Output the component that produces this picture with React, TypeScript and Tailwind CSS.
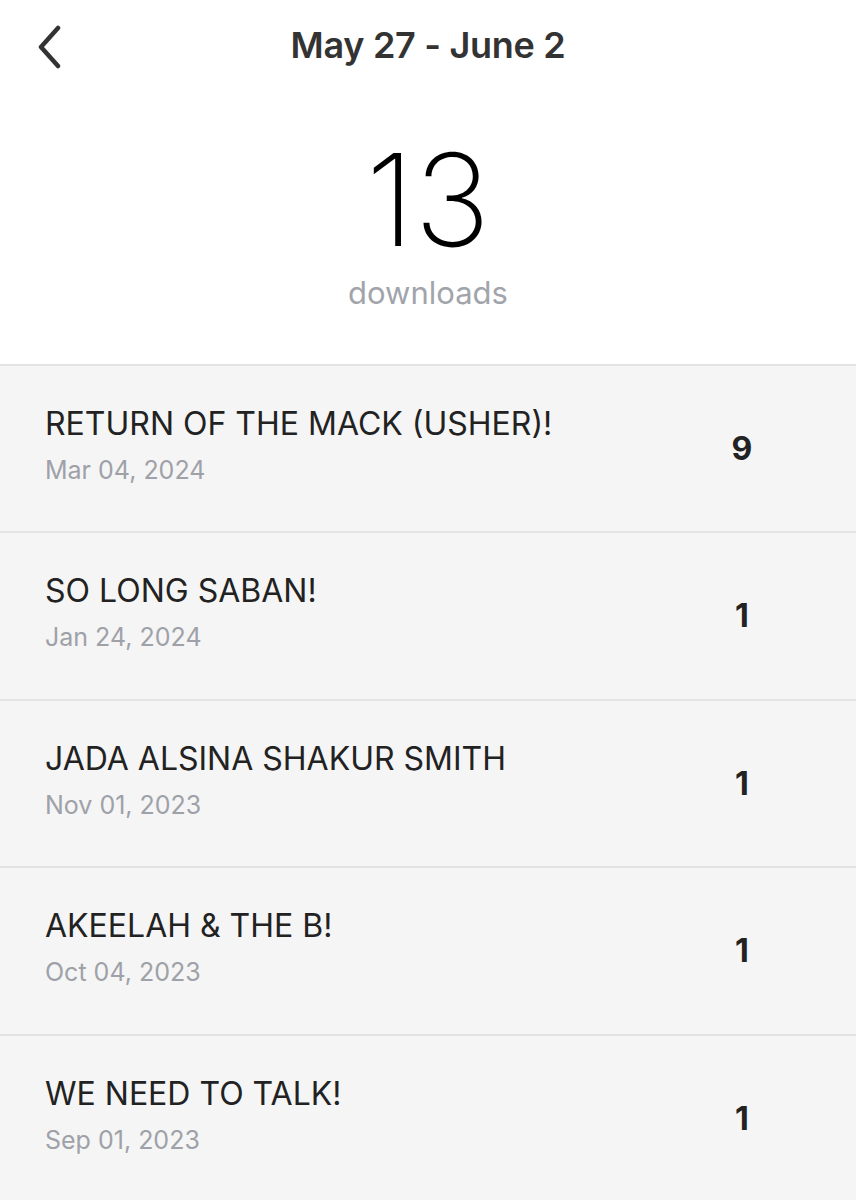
import React from 'react'

const items = [
  { title: 'RETURN OF THE MACK (USHER)!', date: 'Mar 04, 2024', count: 9 },
  { title: 'SO LONG SABAN!', date: 'Jan 24, 2024', count: 1 },
  { title: 'JADA ALSINA SHAKUR SMITH', date: 'Nov 01, 2023', count: 1 },
  { title: 'AKEELAH & THE B!', date: 'Oct 04, 2023', count: 1 },
  { title: 'WE NEED TO TALK!', date: 'Sep 01, 2023', count: 1 },
]

export default function App() {
  return (
    <div className="w-[856px] h-[1200px] overflow-hidden bg-white font-['Inter',sans-serif]">
      <div className="relative h-[90px] flex items-center justify-center">
        <button className="absolute left-[30px] top-[21px] p-1">
          <svg width="32" height="44" viewBox="0 0 32 44" fill="none">
            <path d="M24 3 L7 22 L24 41" stroke="#333" strokeWidth="4.5" strokeLinecap="round" strokeLinejoin="round" />
          </svg>
        </button>
        <h1 className="text-[36px] font-semibold text-[#333] tracking-[-0.3px]">May 27 - June 2</h1>
      </div>

      <div className="h-[274px] flex flex-col items-center pt-[46px]">
        <div className="text-[128px] leading-none font-extralight text-black">13</div>
        <div className="mt-[6px] text-[31px] text-[#a1a4ab]">downloads</div>
      </div>

      <div className="bg-[#f5f5f5] border-t-2 border-[#e3e3e3]">
        {items.map((item, i) => (
          <div
            key={item.title}
            className={`${i % 2 ? 'h-[168px]' : 'h-[167px]'} border-b-2 border-[#e3e3e3] flex items-center pl-[45px] pr-[94px]`}
          >
            <div className="flex-1 -mt-[8px]">
              <div className="text-[32px] leading-[40px] text-[#222]">{item.title}</div>
              <div className="mt-[10px] text-[25px] leading-[32px] text-[#9ea1a8]">{item.date}</div>
            </div>
            <div className="w-[40px] text-center text-[32px] font-bold text-[#222]">{item.count}</div>
          </div>
        ))}
      </div>
    </div>
  )
}
